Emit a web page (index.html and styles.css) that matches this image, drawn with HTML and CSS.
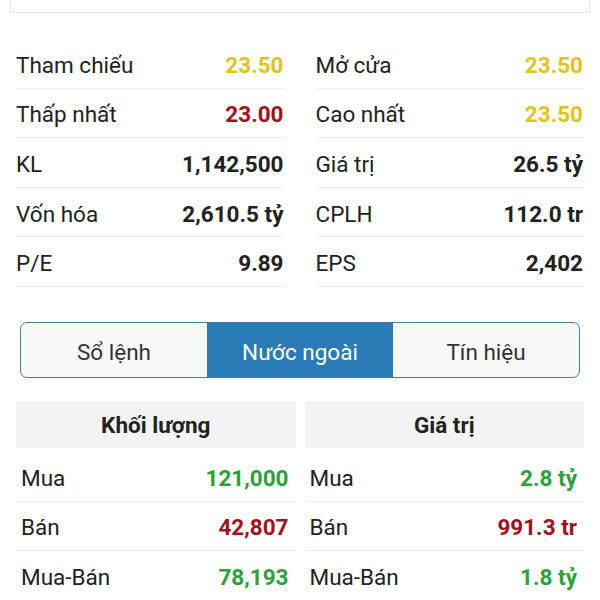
FILE: index.html
```html
<!DOCTYPE html>
<html lang="vi">
<head>
    <meta charset="UTF-8">
    <meta name="viewport" content="width=device-width, initial-scale=1.0">
    <title>Thông tin cổ phiếu</title>
    <link rel="stylesheet" href="styles.css">
</head>
<body>
    <div class="quote-box"></div>

    <div class="stats">
        <div class="stat-col">
            <div class="stat-row"><span>Tham chiếu</span><span class="val ref">23.50</span></div>
            <div class="stat-row"><span>Thấp nhất</span><span class="val down">23.00</span></div>
            <div class="stat-row"><span>KL</span><span class="val">1,142,500</span></div>
            <div class="stat-row"><span>Vốn hóa</span><span class="val">2,610.5 tỷ</span></div>
            <div class="stat-row"><span>P/E</span><span class="val">9.89</span></div>
        </div>
        <div class="stat-col">
            <div class="stat-row"><span>Mở cửa</span><span class="val ref">23.50</span></div>
            <div class="stat-row"><span>Cao nhất</span><span class="val ref">23.50</span></div>
            <div class="stat-row"><span>Giá trị</span><span class="val">26.5 tỷ</span></div>
            <div class="stat-row"><span>CPLH</span><span class="val">112.0 tr</span></div>
            <div class="stat-row"><span>EPS</span><span class="val">2,402</span></div>
        </div>
    </div>

    <div class="tabs">
        <div class="tab">Sổ lệnh</div>
        <div class="tab active">Nước ngoài</div>
        <div class="tab">Tín hiệu</div>
    </div>

    <div class="foreign">
        <div class="foreign-col">
            <div class="foreign-head">Khối lượng</div>
            <div class="foreign-row"><span>Mua</span><span class="val up">121,000</span></div>
            <div class="foreign-row"><span>Bán</span><span class="val down">42,807</span></div>
            <div class="foreign-row"><span>Mua-Bán</span><span class="val up">78,193</span></div>
        </div>
        <div class="foreign-col">
            <div class="foreign-head">Giá trị</div>
            <div class="foreign-row"><span>Mua</span><span class="val up">2.8 tỷ</span></div>
            <div class="foreign-row"><span>Bán</span><span class="val down">991.3 tr</span></div>
            <div class="foreign-row"><span>Mua-Bán</span><span class="val up">1.8 tỷ</span></div>
        </div>
    </div>
</body>
</html>
```

FILE: styles.css
```css
* {
    box-sizing: border-box;
    margin: 0;
    padding: 0;
}

body {
    background: #fff;
    font-family: Roboto, 'Noto Sans', sans-serif;
    color: #222;
    font-size: 22.5px;
    overflow: hidden;
}

.quote-box {
    height: 40px;
    margin: -27px 10px 0;
    border: 1px solid #e2e2e2;
    border-radius: 2px;
}

.stats {
    display: grid;
    grid-template-columns: 1fr 1fr;
    column-gap: 31px;
    padding: 0 16px;
    margin-top: 26px;
}

.stat-row {
    display: flex;
    justify-content: space-between;
    align-items: center;
    height: 49.6px;
    padding: 3px 1px 0 0;
    border-bottom: 1px solid #eeeeee;
}

.val {
    font-weight: 700;
}

.ref { color: #e2c21c; }
.down { color: #a3101a; }
.up { color: #2ba13a; }

.tabs {
    display: grid;
    grid-template-columns: repeat(3, 1fr);
    margin: 35px 20px 0;
    height: 56px;
    border: 1.5px solid #4f7d99;
    border-radius: 7px;
    overflow: hidden;
    background: #f8f8f8;
}

.tab {
    display: flex;
    align-items: center;
    justify-content: center;
    padding-top: 5px;
    color: #333;
}

.tab.active {
    background: #2b7bb7;
    color: #fff;
}

.foreign {
    display: grid;
    grid-template-columns: 1fr 1fr;
    column-gap: 9px;
    padding: 0 16px;
    margin-top: 23px;
}

.foreign-head {
    height: 47px;
    background: #f3f3f3;
    display: flex;
    align-items: center;
    justify-content: center;
    padding-top: 2px;
    font-weight: 700;
    margin-bottom: 4px;
}

.foreign-row {
    display: flex;
    justify-content: space-between;
    align-items: center;
    height: 49.6px;
    padding: 3px 7px 0 5px;
    border-bottom: 1px solid #eeeeee;
}
```
